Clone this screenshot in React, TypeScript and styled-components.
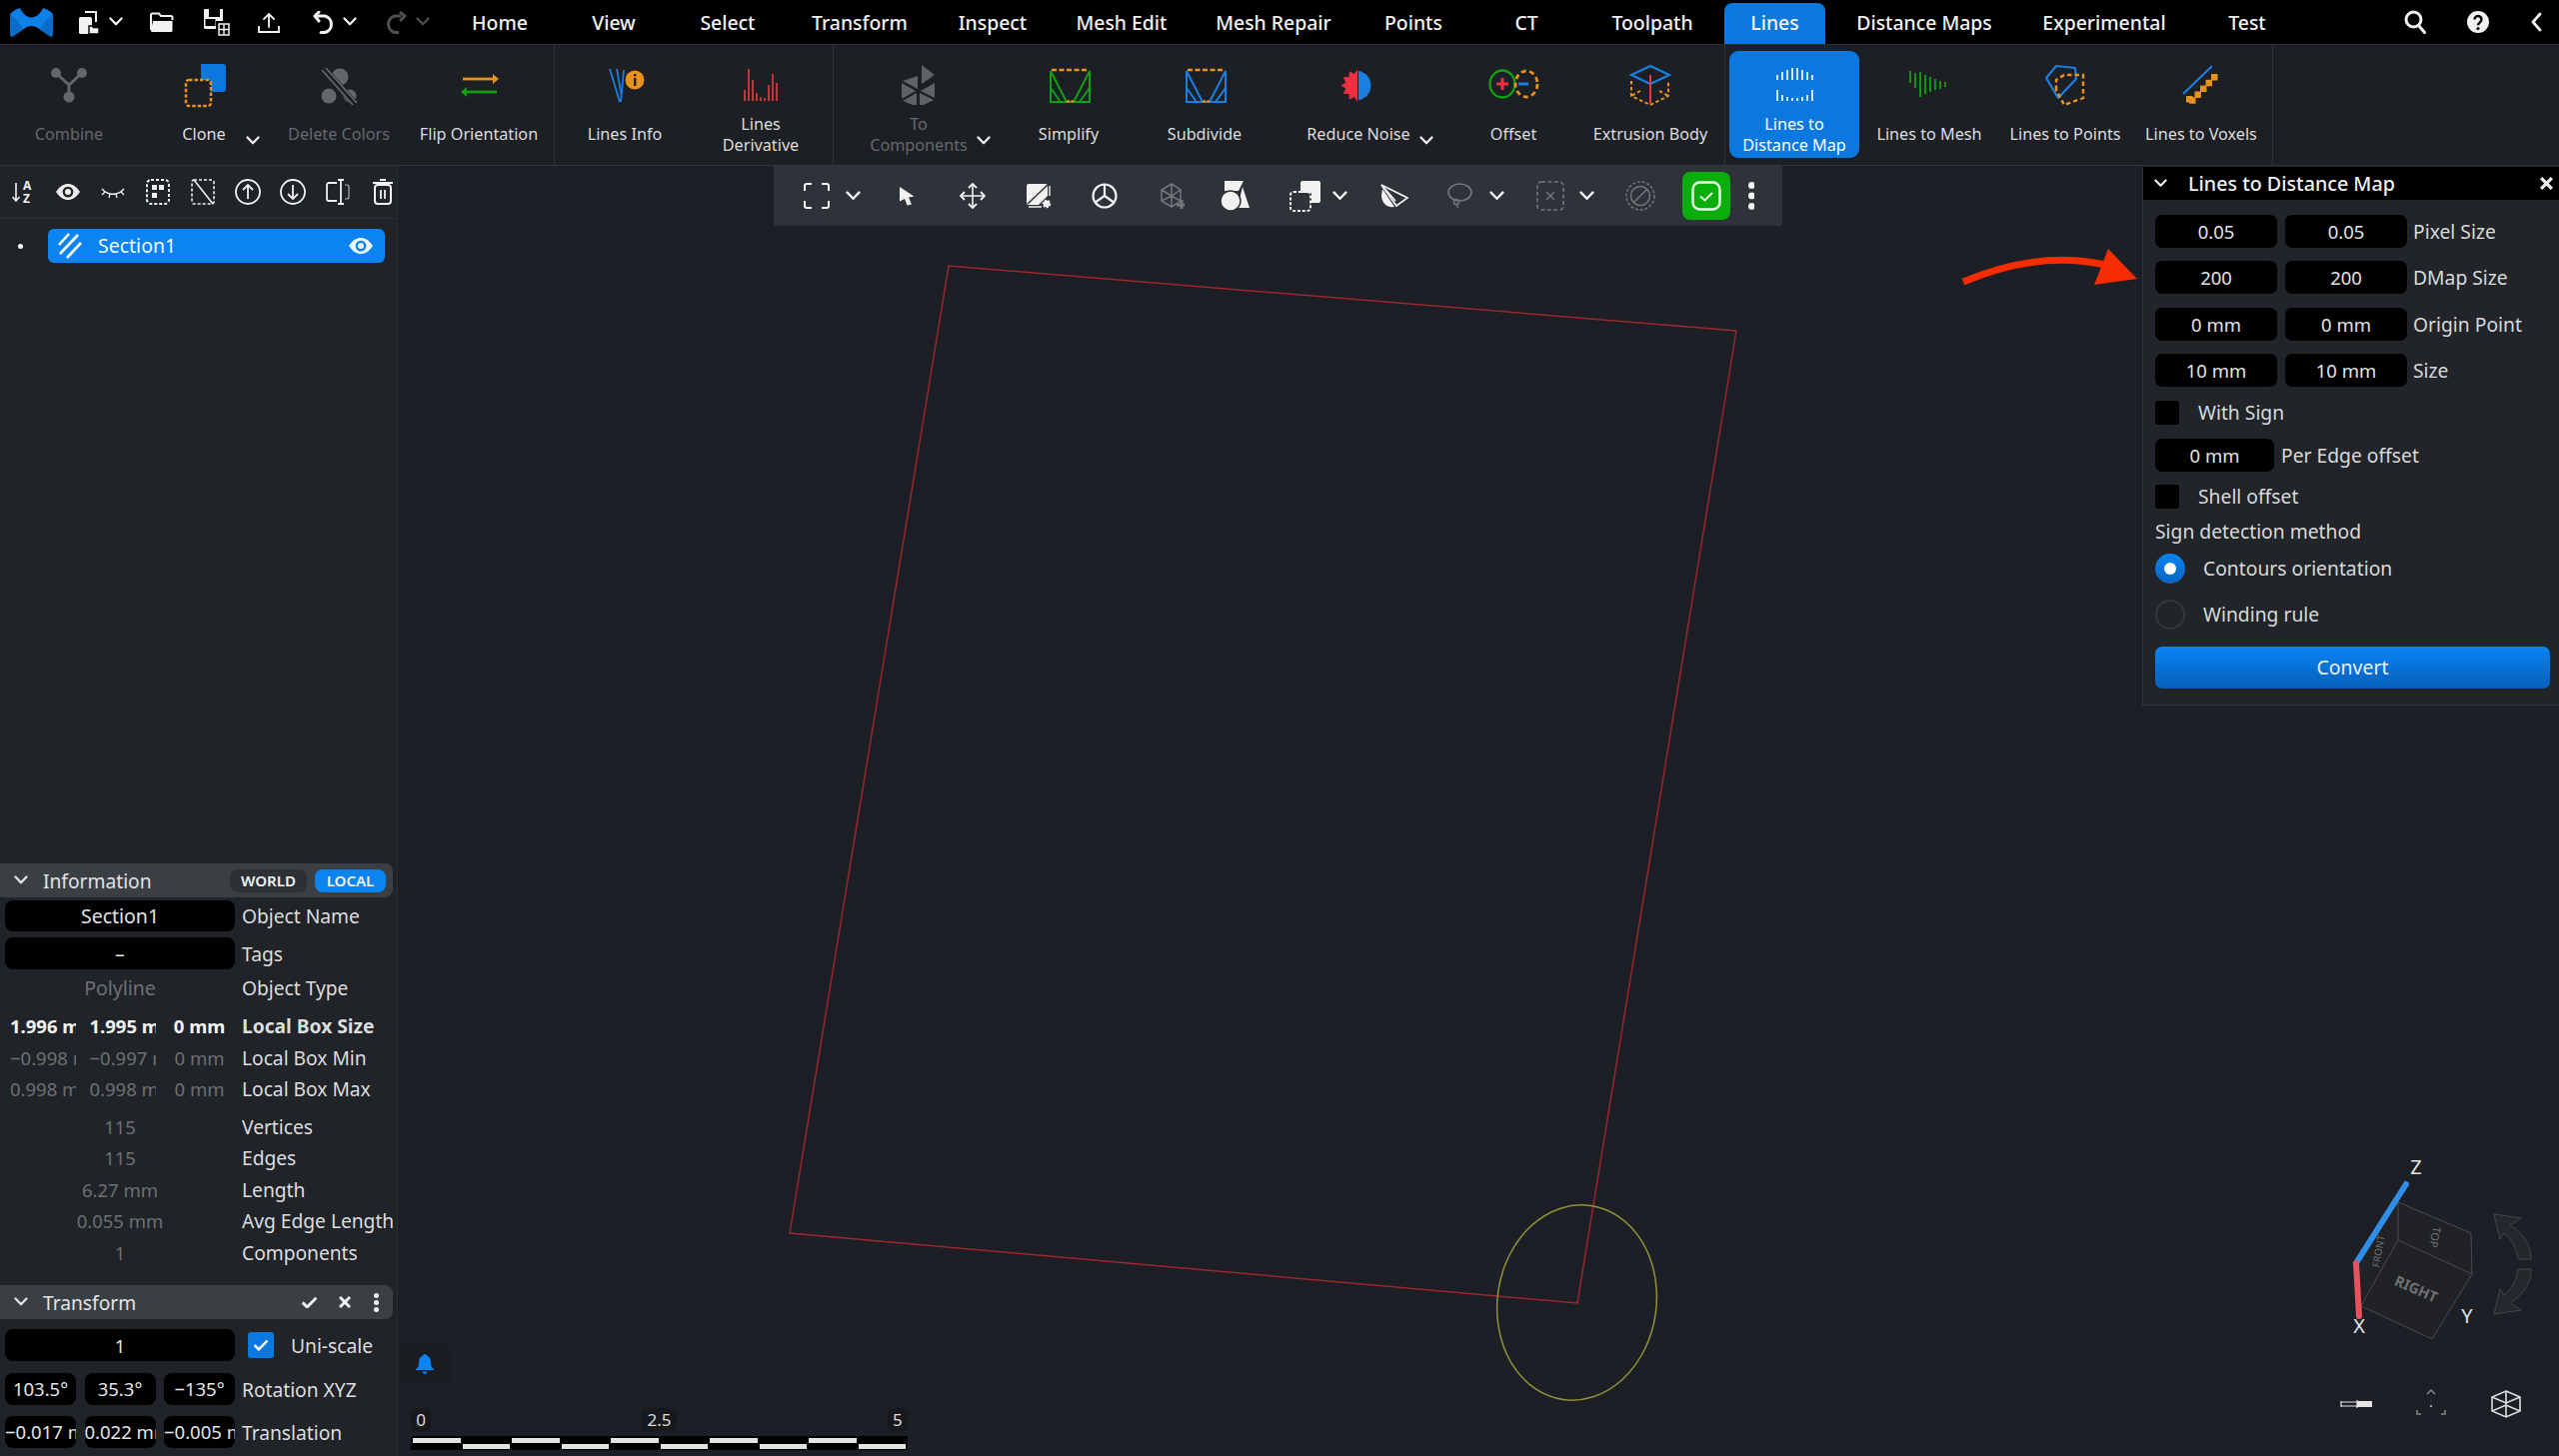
import React from "react";
import styled, { createGlobalStyle, css } from "styled-components";

const Global = createGlobalStyle`
  html, body { margin: 0; padding: 0; background: #1c1f25; }
  * { box-sizing: border-box; }
  body { font-family: "Noto Sans", "Liberation Sans", sans-serif; color: #dfe0e1; }
`;

/* ---------- page frame ---------- */
const Page = styled.div`
  width: 2560px; height: 1457px; display: flex; flex-direction: column; overflow: hidden; background: #1c1f25;
`;
const TopBar = styled.header`
  height: 45px; flex: none; background: #000; display: flex; align-items: stretch;
  border-bottom: 1px solid #2b2e33;
`;
const Quick = styled.div`
  display: flex; align-items: center; padding-left: 10px; width: 443px; flex: none;
`;
const QuickSlot = styled.span<{ $ml?: number; $dim?: boolean }>`
  display: flex; margin-left: ${(p) => p.$ml ?? 0}px; color: ${(p) => (p.$dim ? "#4d4f52" : "#f2f2f2")};
`;
const Tab = styled.div<{ $w: number; $active?: boolean }>`
  width: ${(p) => p.$w}px; display: flex; align-items: center; justify-content: center; flex: none;
  font-size: 19.4px; font-weight: 500; color: #f1f1f1; white-space: nowrap; padding-top: 1px;
  ${(p) => p.$active && css`background: #0a78de; border-radius: 8px 8px 0 0; margin-top: 3px; padding-top: 0; padding-bottom: 2px;`}
`;
const TopRight = styled.div`
  margin-left: auto; display: flex; align-items: center; gap: 41px; padding-right: 17px; color: #f2f2f2;
`;

/* ---------- ribbon ---------- */
const Ribbon = styled.div`
  height: 121px; flex: none; background: #1c1f24; display: flex; border-bottom: 1px solid #33363b;
`;
const Group = styled.div<{ $w: number; $pl?: number }>`
  width: ${(p) => p.$w}px; flex: none; display: flex; padding-left: ${(p) => p.$pl ?? 0}px;
  border-right: 1px solid #2f3237;
`;
const Item = styled.div<{ $w?: number; $ml?: number; $active?: boolean }>`
  position: relative; width: ${(p) => p.$w ?? 136}px; margin-left: ${(p) => p.$ml ?? 0}px; flex: none;
  display: flex; flex-direction: column; align-items: center; padding-top: 18px; height: 120px;
  ${(p) => p.$active && css`
    background: #0a78de; border-radius: 9px; margin-top: 6px; height: 107px; padding-top: 12px;
  `}
`;
const RibbonIconBox = styled.div`
  width: 44px; height: 44px; flex: none;
  svg { display: block; overflow: visible; }
`;
const RibbonLabel = styled.div<{ $off?: boolean; $active?: boolean }>`
  height: 44px; margin-top: 6px; display: flex; align-items: center; text-align: center; justify-content: center;
  font-size: 16.2px; line-height: 21.5px; width: 136px;
  color: ${(p) => (p.$off ? "#66696e" : p.$active ? "#ffffff" : "#dcdddf")};
`;
const RibbonCaret = styled.span<{ $right: number }>`
  position: absolute; right: ${(p) => p.$right}px; top: 91px; display: flex; color: #eee;
`;

/* ---------- main ---------- */
const Main = styled.div`
  flex: 1; min-height: 0; display: flex;
`;
const LeftPanel = styled.aside`
  width: 398px; flex: none; background: #202428; border-right: 1px solid #2a2d32; display: flex; flex-direction: column;
  padding-bottom: 8px;
`;
const LeftTools = styled.div`
  height: 53px; flex: none; display: flex; align-items: center; gap: 9px; padding-left: 5px;
  border-bottom: 1px solid #2e3237; color: #f0f0f0;
`;
const LeftTool = styled.span`
  width: 36px; height: 36px; display: flex; align-items: center; justify-content: center; flex: none;
`;
const TreeRow = styled.div`
  display: flex; align-items: center; height: 34px; margin-top: 10px; flex: none;
`;
const Bullet = styled.span`
  width: 5px; height: 5px; border-radius: 50%; background: #fff; margin-left: 18px; margin-right: 25px;
`;
const TreePill = styled.div`
  width: 337px; height: 34px; border-radius: 6px; background: #0a84f2; display: flex; align-items: center;
  padding-left: 10px; padding-right: 11px; font-size: 19.5px; color: #f1f7ff;
`;
const TreeName = styled.span`
  margin-left: 16px; margin-right: auto; margin-bottom: 2px;
`;
const TreeSpace = styled.div`
  flex: 1;
`;
const SectionHead = styled.div<{ $mt?: number }>`
  height: 34px; flex: none; margin-right: 4px; margin-top: ${(p) => p.$mt ?? 0}px;
  background: #3a3f44; border-radius: 0 8px 8px 0; display: flex; align-items: center;
  padding-left: 14px; font-size: 19.2px; color: #e2e3e4;
`;
const HeadTitle = styled.span`
  margin-left: 15px; margin-right: auto;
`;
const Toggle = styled.span<{ $on?: boolean }>`
  height: 23px; border-radius: 8px; display: flex; align-items: center; justify-content: center;
  font-size: 15px; font-weight: 600; width: ${(p) => (p.$on ? 71 : 77)}px; margin-right: ${(p) => (p.$on ? 7 : 8)}px;
  background: ${(p) => (p.$on ? "#0a84f2" : "#2d3136")}; color: #f2f2f2;
`;
const HeadIcon = styled.span<{ $mr: number }>`
  display: flex; margin-right: ${(p) => p.$mr}px; color: #f2f2f2;
`;
const InfoRow = styled.div<{ $mt?: number; $h?: number }>`
  display: flex; align-items: center; height: ${(p) => p.$h ?? 31}px; padding-left: 5px; flex: none;
  margin-top: ${(p) => p.$mt ?? 0}px;
`;
const Wide = styled.div<{ $black?: boolean; $dim?: boolean; $num?: boolean }>`
  width: 230px; height: 100%; flex: none; display: flex; align-items: center; justify-content: center;
  font-size: ${(p) => (p.$num ? 18.5 : 19.5)}px; border-radius: 8px;
  background: ${(p) => (p.$black ? "#000" : "transparent")};
  color: ${(p) => (p.$dim ? "#6d7074" : "#e4e4e4")};
`;
const Triple = styled.div`
  width: 230px; height: 100%; flex: none; display: flex; justify-content: space-between;
`;
const Cell = styled.div<{ $black?: boolean; $tone?: "bold" | "dim" | "norm" }>`
  width: 71px; height: 100%; border-radius: 8px; overflow: hidden; white-space: nowrap; text-align: center;
  font-size: 18.5px; line-height: ${(p) => (p.$black ? 32 : 31)}px;
  padding: ${(p) => (p.$black ? "0" : "0 5px")};
  background: ${(p) => (p.$black ? "#000" : "transparent")};
  color: ${(p) => (p.$tone === "dim" ? "#6d7074" : p.$tone === "bold" ? "#f4f4f4" : "#e4e4e4")};
  font-weight: ${(p) => (p.$tone === "bold" ? 700 : 400)};
`;
const RowLabel = styled.span<{ $bold?: boolean }>`
  margin-left: 7px; font-size: 19.2px; white-space: nowrap; color: #dcdddf; font-weight: ${(p) => (p.$bold ? 700 : 400)};
`;
const BlueCheck = styled.span`
  width: 26px; height: 26px; margin-left: 13px; border-radius: 3px; background: #0a78de; display: flex;
  align-items: center; justify-content: center; color: #fff; flex: none;
`;
const UniLabel = styled.span`
  margin-left: 17px; font-size: 19.2px; color: #dcdddf;
`;

/* ---------- viewport ---------- */
const Viewport = styled.div`
  position: relative; flex: 1; min-width: 0; background: #1c1f25;
`;
const Canvas = styled.svg`
  position: absolute; inset: 0; width: 100%; height: 100%;
`;
const ViewTools = styled.div`
  position: absolute; left: 376px; top: 0; width: 1009px; height: 60px; background: #2e3239;
  display: flex; align-items: center; padding-left: 25px; border-radius: 0 0 2px 2px;
`;
const ToolSlot = styled.span<{ $ml?: number; $off?: boolean }>`
  width: 36px; height: 36px; flex: none; display: flex; align-items: center; justify-content: center;
  margin-left: ${(p) => p.$ml ?? 0}px; color: ${(p) => (p.$off ? "#73767b" : "#f2f2f2")};
`;
const GreenBtn = styled.span`
  width: 48px; height: 48px; margin-left: 24px; flex: none; border-radius: 8px; background: #0aae0a;
  display: flex; align-items: center; justify-content: center; color: #eaffea;
`;
const BellBox = styled.div`
  position: absolute; left: 2px; top: 1179px; width: 50px; height: 40px; border-radius: 6px; background: #191c20;
  display: flex; align-items: center; justify-content: center; color: #0a84f2;
`;
const Scale = styled.div`
  position: absolute; left: 13px; top: 1243px; width: 497px; display: flex; flex-direction: column;
`;
const ScaleLabels = styled.div`
  display: flex; justify-content: space-between; height: 28px;
`;
const ScaleLabel = styled.span`
  height: 23px; padding: 0 5px; border-radius: 5px; background: #17191d; color: #dcdcdc; font-size: 17px; line-height: 23px;
  min-width: 20px; text-align: center;
`;
const ScaleBar = styled.div`
  height: 14px; background: #000; display: flex; gap: 0; padding: 2px 1px 1px;
`;
const ScaleSeg = styled.span<{ $up: boolean }>`
  flex: 1; height: 5px; margin: 0 1px; background: #e3e3e3; margin-top: ${(p) => (p.$up ? 0 : 6)}px;
`;

/* ---------- right panel ---------- */
const RightPanel = styled.section`
  position: absolute; right: 0; top: 1px; width: 417px; height: 539px; background: #212529;
  border-left: 1px solid #33373c; border-bottom: 1px solid #33373c;
  display: flex; flex-direction: column; padding-left: 12px;
`;
const PanelHead = styled.div`
  height: 33px; flex: none; margin-left: -12px; background: #000; display: flex; align-items: center;
  padding-left: 11px; padding-right: 6px; font-size: 19.7px; font-weight: 500; color: #eee;
`;
const PanelTitle = styled.span`
  margin-left: 21px; margin-right: auto;
`;
const FieldRow = styled.div<{ $mt: number; $h?: number }>`
  display: flex; align-items: center; flex: none; margin-top: ${(p) => p.$mt}px; height: ${(p) => p.$h ?? 33}px;
`;
const Field = styled.div<{ $w?: number; $ml?: number }>`
  width: ${(p) => p.$w ?? 122}px; margin-left: ${(p) => p.$ml ?? 0}px; height: 33px; flex: none; background: #000; border-radius: 7px;
  display: flex; align-items: center; justify-content: center; font-size: 18.5px; color: #e2e2e2;
`;
const FieldLabel = styled.span<{ $ml: number }>`
  margin-left: ${(p) => p.$ml}px; font-size: 19.3px; color: #d8d9da; white-space: nowrap;
`;
const Box = styled.span`
  width: 24px; height: 24px; background: #000; border-radius: 3px; flex: none;
`;
const Radio = styled.span<{ $on?: boolean }>`
  width: 30px; height: 30px; border-radius: 50%; flex: none; display: flex; align-items: center; justify-content: center;
  ${(p) => (p.$on
    ? css`background: linear-gradient(#0a84f2, #0666c4);`
    : css`border: 2px solid #34383d;`)}
`;
const RadioDot = styled.span`
  width: 12px; height: 12px; border-radius: 50%; background: #fff;
`;
const Convert = styled.button`
  margin-top: 17px; width: 395px; height: 42px; flex: none; border: 0; border-radius: 7px; font: inherit; font-size: 19.5px; color: #e9f3ff;
  background: linear-gradient(#0a84f2, #0560bd);
`;

/* ---------- icons ---------- */
const Chev = ({ w = 14, sw = 2.3 }: { w?: number; sw?: number }) => (
  <svg width={w} height={w * 0.65} viewBox="0 0 14 9" fill="none" stroke="currentColor" strokeWidth={sw} strokeLinecap="round" strokeLinejoin="round">
    <path d="M1.5 1.5 7 7.2 12.5 1.5" />
  </svg>
);

const Logo = () => (
  <svg width="43" height="29" viewBox="0 0 43 29">
    <path fill="#0d80ea" d="M0 6C3 3 6 1 10 0C13 6 17 9.500 21.500 9.500 26 9.500 30 6 33 0C37 1 40 3 43 6V27L41 29 30 21.500C27 19 24 18 21.500 18 19 18 16 19 13 21.500L2 29 0 27Z" />
    <path fill="#0a6cc9" d="M0 6C4 9 9 14 13 21.500L2 29 0 27ZM43 6C39 9 34 14 30 21.500L41 29 43 27Z" />
  </svg>
);
const NewDoc = () => (
  <svg width="22" height="23" viewBox="0 0 22 23" fill="none">
    <path d="M7 1h11v10" stroke="currentColor" strokeWidth="2" />
    <rect x="1" y="6" width="13" height="17" rx="1.500" fill="currentColor" />
    <path d="M11 15h3l1.500 1.500H21V23H11Z" fill="currentColor" stroke="#000" strokeWidth="1.400" />
  </svg>
);
const Folder = () => (
  <svg width="24" height="21" viewBox="0 0 24 21" fill="none" stroke="currentColor" strokeWidth="2">
    <path d="M1 18V3a1.500 1.500 0 0 1 1.500-1.500H9L11 4h10a1.500 1.500 0 0 1 1.500 1.500V8" />
    <path d="M1 19a1 1 0 0 0 1 1h19a1.500 1.500 0 0 0 1.500-1.500V9H3Z" fill="currentColor" stroke="none" />
  </svg>
);
const SaveAll = () => (
  <svg width="27" height="28" viewBox="0 0 27 28" fill="none">
    <path d="M1 2a1 1 0 0 1 1-1h4v8h11V1l3 0v12h-7v8H2a1 1 0 0 1-1-1Z" fill="currentColor" />
    <rect x="9" y="1" width="5" height="5" fill="#000" />
    <rect x="2.500" y="11" width="10" height="7" fill="#000" />
    <rect x="16" y="16" width="10" height="11" stroke="currentColor" strokeWidth="1.500" />
    <path d="M21 16v11M16 21.500h10" stroke="currentColor" strokeWidth="1.500" />
  </svg>
);
const Upload = () => (
  <svg width="22" height="21" viewBox="0 0 22 21" fill="none" stroke="currentColor" strokeWidth="1.800">
    <path d="M11 15V2M6 7l5-5 5 5" strokeLinecap="round" />
    <path d="M1 14v6h20v-6" />
  </svg>
);
const Undo = () => (
  <svg width="22" height="23" viewBox="0 0 22 23" fill="none" stroke="currentColor" strokeWidth="3">
    <path d="M4 5h8a8.500 8.500 0 0 1 0 16.500H8" strokeLinecap="round" />
    <path d="M6 1 2 5l4 5" strokeLinecap="round" strokeLinejoin="round" />
  </svg>
);
const Redo = () => (
  <svg width="22" height="23" viewBox="0 0 22 23" fill="none" stroke="currentColor" strokeWidth="3">
    <path d="M16 5H10a8.500 8.500 0 0 0 0 16.500h4" />
    <path d="M15 1l5 4-5 5" />
  </svg>
);
const Search = () => (
  <svg width="22" height="24" viewBox="0 0 22 24" fill="none" stroke="currentColor" strokeWidth="3">
    <circle cx="9.500" cy="9.500" r="7.500" />
    <path d="M15 16l5.500 6.500" strokeLinecap="round" />
  </svg>
);
const Help = () => (
  <svg width="22" height="22" viewBox="0 0 22 22">
    <circle cx="11" cy="11" r="11" fill="currentColor" />
    <path d="M7.500 8.500a3.500 3.500 0 1 1 5.500 2.800c-1.300 1-2 1.500-2 3" fill="none" stroke="#000" strokeWidth="2.500" />
    <circle cx="11" cy="17.500" r="1.600" fill="#000" />
  </svg>
);
const BackChev = () => (
  <svg width="12" height="20" viewBox="0 0 12 20" fill="none" stroke="currentColor" strokeWidth="2.800" strokeLinecap="round" strokeLinejoin="round">
    <path d="M10 2 3 10l7 8" />
  </svg>
);

/* ribbon icons, on a 44 x 44 box */
const R = ({ children }: { children: React.ReactNode }) => (
  <svg width="44" height="44" viewBox="0 0 44 44" fill="none">{children}</svg>
);
const GR = "#63666b";
const OR = "#e8921b";
const BL = "#1a7fe0";
const GN = "#12a012";

const ICombine = () => (
  <R>
    <path d="M9 10 22 22 35 10M22 22V34" stroke={GR} strokeWidth="3" />
    <circle cx="9" cy="10" r="5" fill={GR} /><circle cx="35" cy="10" r="5" fill={GR} /><circle cx="22" cy="34" r="5.500" fill={GR} />
  </R>
);
const IClone = () => (
  <R>
    <path d="M19 1h22a3 3 0 0 1 3 3v22a3 3 0 0 1-3 3H19Z" fill="#0a78de" />
    <rect x="4" y="17" width="25" height="26" rx="3" fill="#1c1f24" stroke={OR} strokeWidth="2.500" strokeDasharray="3.500 2" />
  </R>
);
const IDelete = () => (
  <R>
    <circle cx="23" cy="14" r="8.500" fill={GR} /><circle cx="12" cy="33" r="7.500" fill={GR} /><circle cx="33" cy="33" r="6.500" fill={GR} />
    <path d="M7 6 38 41" stroke="#1c1f24" strokeWidth="7" />
    <path d="M5 7 36 42M9 5 40 40" stroke={GR} strokeWidth="1.800" />
  </R>
);
const IFlip = () => (
  <R>
    <path d="M6 16H37" stroke={OR} strokeWidth="2.800" /><path d="M36 11l6 5-6 5Z" fill={OR} />
    <path d="M9 29H40" stroke={GN} strokeWidth="2.800" /><path d="M10 24l-6 5 6 5Z" fill={GN} />
  </R>
);
const ILinesInfo = () => (
  <R>
    <path d="M7 6 17 39M14 6 19 34M21 7 18 39" stroke={BL} strokeWidth="1.800" />
    <circle cx="32" cy="17" r="9.500" fill={OR} />
    <rect x="31" y="15" width="2.400" height="8" fill="#1c1f24" /><rect x="31" y="11" width="2.400" height="2.400" fill="#1c1f24" />
  </R>
);
const IDeriv = () => (
  <R>
    <path d="M6 38V27M10 38V6M14 38V17M18 38V30M22 38V34M26 38V35M30 38V22M34 38V11M38 38V20" stroke="#c4323d" strokeWidth="2" />
  </R>
);
const IComponents = () => (
  <R>
    <g fill="#5f6266">
      <path d="M25 2 38 12 25 21Z" />
      <path d="M21 13V26L6 18Z" /><path d="M5 20 19 28 5 36Z" /><path d="M6 38 20 30V42H16Z" />
      <path d="M23 30 37 37 27 42H23Z" /><path d="M38 20V35L24 28Z" />
    </g>
  </R>
);
const IMeshTri = ({ c }: { c: string }) => (
  <R>
    <path d="M4 8V39H43V8L27 39M4 8 20 39M4 25 14 39M43 25 33 39" stroke={c} strokeWidth="2" />
    <path d="M5 7H42" stroke={OR} strokeWidth="2.500" strokeDasharray="5 2.500" />
    <path d="M20 38.500H27" stroke={OR} strokeWidth="2.500" strokeDasharray="3 1.500" />
  </R>
);
const spikes = (() => {
  const pts: string[] = ["21,6"];
  for (let i = 1; i < 12; i++) {
    const a = -Math.PI / 2 - (i * Math.PI) / 12;
    const r = i % 2 ? 12 : 16.500;
    pts.push(`${(21 + Math.cos(a) * r).toFixed(1)},${(22.5 + Math.sin(a) * r).toFixed(1)}`);
  }
  pts.push("21,39");
  return pts.join(" ");
})();
const INoise = () => (
  <R>
    <polygon points={spikes} fill="#f0303f" />
    <path d="M22 8c3 0 3 1 5 2s3 1 4 3 2 2 2.500 4 1 3 1 5.500-1 3-1 5.500-2 2-2.500 4-3 2-4 3-2 2-5 2Z" fill={BL} />
  </R>
);
const IOffset = () => (
  <R>
    <ellipse cx="11" cy="21" rx="12.500" ry="13.500" stroke={GN} strokeWidth="2.300" />
    <path d="M11 15V27M5 21H17" stroke="#ee3040" strokeWidth="3" />
    <ellipse cx="35" cy="21" rx="11" ry="13" stroke={OR} strokeWidth="2.800" strokeDasharray="5 3.500" />
    <path d="M27 21H37" stroke={BL} strokeWidth="3" />
  </R>
);
const IExtrude = () => (
  <R>
    <path d="M3 18V33L22 42 40 33V18M12 28 3 33M31 28 40 33" stroke={OR} strokeWidth="2" strokeDasharray="3.500 2.500" />
    <path d="M22 3 41 12 22 21 3 12Z" stroke={BL} strokeWidth="2.200" />
    <path d="M22 12V41" stroke="#e23a48" strokeWidth="2" />
  </R>
);
const ILinesDM = () => (
  <R>
    <path d="M5 17V12M10 17V9M15 17V7M20 17V5M25 17V5M30 17V7M35 17V9M40 17V12" stroke="#fff" strokeWidth="1.800" opacity=".9" />
    <path d="M5 38V27M10 38V32M15 38V34M20 38V35M25 38V35M30 38V34M35 38V32M40 38V27" stroke="#fff" strokeWidth="1.800" opacity=".9" />
  </R>
);
const ILinesMesh = () => (
  <R>
    <path d="M3 8V20M8 10V25M13 9V34M18 12V31M23 14V29M28 16V27M33 18V26M38 19V24" stroke={GN} strokeWidth="1.800" />
  </R>
);
const ILinesPoints = () => (
  <R>
    <path d="M3 15 13 3 32 5 33 16 15 35Z" stroke={BL} strokeWidth="2.200" strokeLinejoin="round" />
    <path d="M13 27V17L21 12H40V35L21 42Z" stroke={OR} strokeWidth="2.500" strokeDasharray="4.500 3" />
  </R>
);
const ILinesVoxels = () => (
  <R>
    <path d="M33 3 4 31" stroke={BL} strokeWidth="2.200" />
    <g fill={OR}>
      {[0, 1, 2, 3, 4].map((i) => <rect key={i} x={32 - i * 5.500} y={11 + i * 5.800} width="6.500" height="6.500" />)}
      <rect x="7" y="33" width="6.500" height="6.500" />
    </g>
  </R>
);

/* left panel toolbar icons */
const S = ({ w = 26, h = 26, children }: { w?: number; h?: number; children: React.ReactNode }) => (
  <svg width={w} height={h} viewBox={`0 0 ${w} ${h}`} fill="none" stroke="currentColor" strokeWidth="1.800">{children}</svg>
);
const IEye = ({ w = 26, hole = "#202428" }: { w?: number; hole?: string }) => (
  <svg width={w} height={w * 0.7} viewBox="0 0 26 18">
    <path d="M1 9C5 3 9 1 13 1s8 2 12 8c-4 6-8 8-12 8S5 15 1 9Z" fill="currentColor" />
    <circle cx="13" cy="9" r="5.400" fill={hole} />
    <circle cx="13" cy="9" r="3" fill="currentColor" />
  </svg>
);
const ISort = () => (
  <S>
    <path d="M6 4V22M2.500 18 6 22l3.500-4" strokeWidth="1.600" />
    <text x="13" y="11" fill="currentColor" stroke="none" fontSize="12" fontWeight="700" fontFamily="Noto Sans">A</text>
    <text x="13" y="24" fill="currentColor" stroke="none" fontSize="12" fontWeight="700" fontFamily="Noto Sans">Z</text>
  </S>
);
const IClosedEye = () => (
  <S>
    <path d="M2 10c6 7 16 7 22 0M5 13l-3 3M10 15l-1 4M16 15l1 4M21 13l3 3" strokeWidth="1.300" />
  </S>
);
const ISelAll = () => (
  <S>
    <rect x="2" y="1" width="22" height="24" rx="4" strokeDasharray="3 2" strokeWidth="2" />
    <rect x="7" y="6" width="5" height="5" fill="currentColor" stroke="none" />
    <rect x="14" y="6" width="5" height="5" fill="currentColor" stroke="none" />
    <rect x="7" y="14" width="5" height="5" fill="currentColor" stroke="none" />
  </S>
);
const ISelNone = () => (
  <S>
    <rect x="2" y="1" width="22" height="24" rx="2" strokeDasharray="3 2" strokeWidth="1.600" />
    <path d="M4 1 23 25" strokeWidth="1.600" />
  </S>
);
const IUp = () => (
  <S><circle cx="13" cy="13" r="12" /><path d="M13 20V6M8 11l5-5 5 5" /></S>
);
const IDown = () => (
  <S><circle cx="13" cy="13" r="12" /><path d="M13 6v14M8 15l5 5 5-5" /></S>
);
const ISplit = () => (
  <S>
    <path d="M12 4H4a2 2 0 0 0-2 2v14a2 2 0 0 0 2 2h8" />
    <path d="M20 6h2a2 2 0 0 1 2 2v10a2 2 0 0 1-2 2h-2" strokeWidth="1.200" opacity=".7" />
    <path d="M16 1v24M13 1h6M13 25h6" />
  </S>
);
const ITrash = () => (
  <S>
    <rect x="5" y="6" width="16" height="19" rx="3" strokeWidth="2" />
    <path d="M3 4h20M10 1h6" strokeWidth="2" />
    <path d="M11 11v9M15 11v9" strokeWidth="1.800" />
  </S>
);
const ISection = () => (
  <svg width="24" height="26" viewBox="0 0 24 26" stroke="#fff" strokeWidth="2.600" fill="none">
    <path d="M1 12 11 1M2 21 20 2M9 25 23 10" />
  </svg>
);

/* viewport toolbar icons */
const IFull = () => (
  <S><path d="M1 8V3a2 2 0 0 1 2-2h5M18 1h5a2 2 0 0 1 2 2v5M25 18v5a2 2 0 0 1-2 2h-5M8 25H3a2 2 0 0 1-2-2v-5" strokeWidth="2" /></S>
);
const ICursor = () => (
  <svg width="15" height="19" viewBox="0 0 15 19"><path d="M0 0 14.500 9.500 9 10.500 12 17.500 7.500 18.500 5 12 0 14.500Z" fill="currentColor" /></svg>
);
const IMove = () => (
  <S>
    <path d="M13 1V25M1 13H25" strokeWidth="1.600" />
    <path d="M9 5l4-4 4 4M9 21l4 4 4-4M5 9l-4 4 4 4M21 9l4 4-4 4" strokeWidth="1.800" />
  </S>
);
const ISurface = () => (
  <S>
    <path d="M3 1h17a2 2 0 0 1 2 2v10L13 22H3a2 2 0 0 1-2-2V3a2 2 0 0 1 2-2Z" fill="currentColor" stroke="none" />
    <path d="M22 2 2 21" stroke="#2e3239" strokeWidth="1.500" />
    <path d="M24 3v10M3 24h13" strokeWidth="1.400" />
    <circle cx="21" cy="21" r="3.200" fill="currentColor" stroke="currentColor" strokeWidth="2.200" strokeDasharray="2 1.200" />
  </S>
);
const IMercedes = () => (
  <S><circle cx="13" cy="13" r="11.500" strokeWidth="2.200" /><path d="M13 1V13L3 20M13 13 23 20" strokeWidth="2.200" /></S>
);
const IMeshPlus = () => (
  <S>
    <path d="M3 7 13 1 22 7V18L13 24 3 18ZM13 1V13M3 7 13 13 22 7M3 18 13 13 22 18M13 13V24" strokeWidth="1.500" />
    <path d="M23 17V27M18 22H28" strokeWidth="3" />
  </S>
);
const IShapes = () => (
  <svg width="30" height="30" viewBox="0 0 30 30" fill="currentColor">
    <path d="M5 0H24L19 10H5Z" />
    <path d="M23 6 30 27H18Z" />
    <circle cx="11" cy="20" r="10" stroke="#2e3239" strokeWidth="1.500" />
  </svg>
);
const ICopy = () => (
  <svg width="31" height="31" viewBox="0 0 31 31" fill="none">
    <path d="M11 2a2 2 0 0 1 2-2h16a2 2 0 0 1 2 2v18a2 2 0 0 1-2 2H22V12H11Z" fill="currentColor" />
    <rect x="1" y="11" width="20" height="19" rx="3" stroke="currentColor" strokeWidth="2" strokeDasharray="3 1.800" />
  </svg>
);
const ISail = () => (
  <svg width="28" height="25" viewBox="0 0 28 25" fill="none" stroke="currentColor" strokeWidth="1.700">
    <path d="M1 1 27 14 16 22Z" />
    <path d="M1 1 15 17" />
    <path d="M1 11C1 19 6 24 14 23L2 5Z" fill="currentColor" stroke="none" />
  </svg>
);
const ILasso = () => (
  <svg width="25" height="26" viewBox="0 0 25 26" fill="none" stroke="currentColor" strokeWidth="1.600">
    <ellipse cx="12.500" cy="9.500" rx="11.500" ry="8.500" />
    <circle cx="9" cy="19" r="2.500" />
    <path d="M9 21c0 2 1 3 2 4" />
  </svg>
);
const IXBox = () => (
  <S w={28} h={30}>
    <rect x="1" y="1" width="26" height="28" rx="4" strokeDasharray="4 2.500" strokeWidth="1.600" />
    <path d="M10 11l8 8M18 11l-8 8" strokeWidth="1.400" />
  </S>
);
const INoEntry = () => (
  <S w={30} h={30}>
    <circle cx="15" cy="15" r="14" strokeDasharray="3 1.800" strokeWidth="1.500" />
    <circle cx="15" cy="15" r="9.500" strokeWidth="1.600" />
    <path d="M8.500 21.500 21.500 8.500" strokeWidth="1.600" />
  </S>
);
const IGreenCheck = () => (
  <svg width="30" height="30" viewBox="0 0 30 30" fill="none" stroke="currentColor">
    <rect x="1.500" y="1.500" width="27" height="27" rx="7" strokeWidth="2.400" />
    <path d="M9 15.500 13.500 19.500 21 12" strokeWidth="2" />
  </svg>
);
const IDots = ({ r = 3.400, gap = 10.500 }: { r?: number; gap?: number }) => (
  <svg width={r * 2} height={gap * 2 + r * 2} viewBox={`0 0 ${r * 2} ${gap * 2 + r * 2}`} fill="currentColor">
    <circle cx={r} cy={r} r={r} /><circle cx={r} cy={r + gap} r={r} /><circle cx={r} cy={r + gap * 2} r={r} />
  </svg>
);
const ICheck = ({ w = 18, sw = 3.200 }: { w?: number; sw?: number }) => (
  <svg width={w} height={w * 0.75} viewBox="0 0 18 14" fill="none" stroke="currentColor" strokeWidth={sw}>
    <path d="M1.500 7 6.500 12 16.500 2" />
  </svg>
);
const ICross = ({ w = 12 }: { w?: number }) => (
  <svg width={w} height={w} viewBox="0 0 12 12" fill="none" stroke="currentColor" strokeWidth="3">
    <path d="M1 1 11 11M11 1 1 11" />
  </svg>
);
const IBell = () => (
  <svg width="18" height="20" viewBox="0 0 18 20" fill="currentColor">
    <path d="M9 0a2 2 0 0 1 2 1.500C14 2.500 15 5 15 9c0 3 1 5 3 6v1H0v-1c2-1 3-3 3-6 0-4 1-6.500 4-7.500A2 2 0 0 1 9 0Z" />
    <path d="M6.500 17.500h5a2.500 2.500 0 0 1-5 0Z" />
  </svg>
);

/* ---------- data ---------- */
const tabs: [string, number][] = [
  ["Home", 114], ["View", 114], ["Select", 114], ["Transform", 150], ["Inspect", 116], ["Mesh Edit", 142],
  ["Mesh Repair", 162], ["Points", 118], ["CT", 108], ["Toolpath", 144], ["Lines", 101], ["Distance Maps", 198],
  ["Experimental", 162], ["Test", 124],
];

type Row = { v: string; l: string; dim?: boolean; black?: boolean; mt?: number };
const topRows: Row[] = [
  { v: "Section1", l: "Object Name", black: true, mt: 3 },
  { v: "–", l: "Tags", black: true, mt: 6 },
  { v: "Polyline", l: "Object Type", dim: true, mt: 3 },
];
const boxRows: { c: string[]; l: string; tone: "bold" | "dim"; mt: number }[] = [
  { c: ["1.996 mm", "1.995 mm", "0 mm"], l: "Local Box Size", tone: "bold", mt: 7 },
  { c: ["−0.998 mm", "−0.997 mm", "0 mm"], l: "Local Box Min", tone: "dim", mt: 1 },
  { c: ["0.998 mm", "0.998 mm", "0 mm"], l: "Local Box Max", tone: "dim", mt: 0 },
];
const statRows: Row[] = [
  { v: "115", l: "Vertices", mt: 7 }, { v: "115", l: "Edges" }, { v: "6.27 mm", l: "Length", mt: 1 },
  { v: "0.055 mm", l: "Avg Edge Length" }, { v: "1", l: "Components", mt: 1 },
];
const mapRows: { a: string; b: string; l: string; mt: number }[] = [
  { a: "0.05", b: "0.05", l: "Pixel Size", mt: 14.5 },
  { a: "200", b: "200", l: "DMap Size", mt: 13.5 },
  { a: "0 mm", b: "0 mm", l: "Origin Point", mt: 13.5 },
  { a: "10 mm", b: "10 mm", l: "Size", mt: 13.5 },
];

export default function App() {
  return (
    <Page>
      <Global />
      <TopBar>
        <Quick>
          <QuickSlot><Logo /></QuickSlot>
          <QuickSlot $ml={25}><NewDoc /></QuickSlot>
          <QuickSlot $ml={9}><Chev /></QuickSlot>
          <QuickSlot $ml={27}><Folder /></QuickSlot>
          <QuickSlot $ml={29}><SaveAll /></QuickSlot>
          <QuickSlot $ml={28}><Upload /></QuickSlot>
          <QuickSlot $ml={33}><Undo /></QuickSlot>
          <QuickSlot $ml={8}><Chev /></QuickSlot>
          <QuickSlot $ml={28} $dim><Redo /></QuickSlot>
          <QuickSlot $ml={9} $dim><Chev /></QuickSlot>
        </Quick>
        {tabs.map(([t, w]) => <Tab key={t} $w={w} $active={t === "Lines"}>{t}</Tab>)}
        <TopRight>
          <Search /><Help /><BackChev />
        </TopRight>
      </TopBar>

      <Ribbon>
        <Group $w={555}>
          <Item $w={138}><RibbonIconBox><ICombine /></RibbonIconBox><RibbonLabel $off>Combine</RibbonLabel></Item>
          <Item $w={132}><RibbonIconBox><IClone /></RibbonIconBox><RibbonLabel>Clone</RibbonLabel><RibbonCaret $right={10}><Chev /></RibbonCaret></Item>
          <Item $w={138}><RibbonIconBox><IDelete /></RibbonIconBox><RibbonLabel $off>Delete Colors</RibbonLabel></Item>
          <Item $w={142}><RibbonIconBox><IFlip /></RibbonIconBox><RibbonLabel>Flip Orientation</RibbonLabel></Item>
        </Group>
        <Group $w={279} $pl={2}>
          <Item><RibbonIconBox><ILinesInfo /></RibbonIconBox><RibbonLabel>Lines Info</RibbonLabel></Item>
          <Item><RibbonIconBox><IDeriv /></RibbonIconBox><RibbonLabel>Lines<br />Derivative</RibbonLabel></Item>
        </Group>
        <Group $w={892} $pl={17}>
          <Item>
            <RibbonIconBox><IComponents /></RibbonIconBox><RibbonLabel $off>To<br />Components</RibbonLabel>
            <RibbonCaret $right={-4}><Chev /></RibbonCaret>
          </Item>
          <Item $ml={14}><RibbonIconBox><IMeshTri c={GN} /></RibbonIconBox><RibbonLabel>Simplify</RibbonLabel></Item>
          <Item><RibbonIconBox><IMeshTri c={BL} /></RibbonIconBox><RibbonLabel>Subdivide</RibbonLabel></Item>
          <Item $ml={18}>
            <RibbonIconBox><INoise /></RibbonIconBox><RibbonLabel>Reduce Noise</RibbonLabel>
            <RibbonCaret $right={-7}><Chev /></RibbonCaret>
          </Item>
          <Item $ml={19}><RibbonIconBox><IOffset /></RibbonIconBox><RibbonLabel>Offset</RibbonLabel></Item>
          <Item $ml={1}><RibbonIconBox><IExtrude /></RibbonIconBox><RibbonLabel>Extrusion Body</RibbonLabel></Item>
        </Group>
        <Group $w={548} $pl={4}>
          <Item $w={130} $active><RibbonIconBox><ILinesDM /></RibbonIconBox><RibbonLabel $active>Lines to<br />Distance Map</RibbonLabel></Item>
          <Item $ml={2}><RibbonIconBox><ILinesMesh /></RibbonIconBox><RibbonLabel>Lines to Mesh</RibbonLabel></Item>
          <Item><RibbonIconBox><ILinesPoints /></RibbonIconBox><RibbonLabel>Lines to Points</RibbonLabel></Item>
          <Item><RibbonIconBox><ILinesVoxels /></RibbonIconBox><RibbonLabel>Lines to Voxels</RibbonLabel></Item>
        </Group>
      </Ribbon>

      <Main>
        <LeftPanel>
          <LeftTools>
            <LeftTool><ISort /></LeftTool><LeftTool><IEye /></LeftTool><LeftTool><IClosedEye /></LeftTool>
            <LeftTool><ISelAll /></LeftTool><LeftTool><ISelNone /></LeftTool><LeftTool><IUp /></LeftTool>
            <LeftTool><IDown /></LeftTool><LeftTool><ISplit /></LeftTool><LeftTool><ITrash /></LeftTool>
          </LeftTools>
          <TreeRow>
            <Bullet />
            <TreePill><ISection /><TreeName>Section1</TreeName><IEye hole="#0a84f2" /></TreePill>
          </TreeRow>
          <TreeSpace />
          <SectionHead>
            <Chev /><HeadTitle>Information</HeadTitle>
            <Toggle>WORLD</Toggle><Toggle $on>LOCAL</Toggle>
          </SectionHead>
          {topRows.map((r) => (
            <InfoRow key={r.l} $mt={r.mt} $h={r.l === "Tags" ? 32 : 31}>
              <Wide $black={r.black} $dim={r.dim}>{r.v}</Wide><RowLabel>{r.l}</RowLabel>
            </InfoRow>
          ))}
          {boxRows.map((r) => (
            <InfoRow key={r.l} $mt={r.mt}>
              <Triple>{r.c.map((c, i) => <Cell key={i} $tone={r.tone}>{c}</Cell>)}</Triple>
              <RowLabel $bold={r.tone === "bold"}>{r.l}</RowLabel>
            </InfoRow>
          ))}
          {statRows.map((r) => (
            <InfoRow key={r.l} $mt={r.mt}>
              <Wide $dim $num>{r.v}</Wide><RowLabel>{r.l}</RowLabel>
            </InfoRow>
          ))}
          <SectionHead $mt={17}>
            <Chev /><HeadTitle>Transform</HeadTitle>
            <HeadIcon $mr={21}><ICheck w={17} /></HeadIcon>
            <HeadIcon $mr={23}><ICross /></HeadIcon>
            <HeadIcon $mr={14}><IDots r={2.5} gap={7} /></HeadIcon>
          </SectionHead>
          <InfoRow $mt={10} $h={32}>
            <Wide $black $num>1</Wide><BlueCheck><ICheck w={16} sw={3} /></BlueCheck><UniLabel>Uni-scale</UniLabel>
          </InfoRow>
          <InfoRow $mt={12} $h={32}>
            <Triple><Cell $black>103.5°</Cell><Cell $black>35.3°</Cell><Cell $black>−135°</Cell></Triple>
            <RowLabel>Rotation XYZ</RowLabel>
          </InfoRow>
          <InfoRow $mt={11} $h={32}>
            <Triple><Cell $black>−0.017 mm</Cell><Cell $black>0.022 mm</Cell><Cell $black>−0.005 mm</Cell></Triple>
            <RowLabel>Translation</RowLabel>
          </InfoRow>
        </LeftPanel>

        <Viewport>
          <Canvas viewBox="398 166 2162 1291" fill="none">
            <polygon points="949,266 1737,331 1578,1304 790,1234" stroke="#9c2630" strokeWidth="1.500" />
            <ellipse cx="1577.500" cy="1303.500" rx="79.500" ry="98" transform="rotate(8 1577.5 1303.5)" stroke="#8f9436" strokeWidth="1.500" />

            {/* red annotation arrow */}
            <path d="M1964 282Q2040 250 2106 265" stroke="#f42c00" strokeWidth="7" />
            <polygon points="2109,249 2138,279 2095,285" fill="#f42c00" />

            {/* orientation cube */}
            <g stroke="#4a4c50" strokeWidth="1">
              <path d="M2399 1203 2472 1234 2473 1275 2433 1340 2362 1307 2357 1264Z" fill="#202226" />
              <path d="M2399 1241 2473 1275M2399 1241 2362 1307M2399 1203V1241" />
            </g>
            <text x="2417" y="1295" transform="rotate(24 2417 1290)" fill="#6f7175" fontSize="14.5" fontWeight="700" fontFamily="Noto Sans" textAnchor="middle">RIGHT</text>
            <text x="2436" y="1242" transform="rotate(100 2436 1238)" fill="#6f7175" fontSize="11" fontFamily="Noto Sans" textAnchor="middle">TOP</text>
            <text x="2379" y="1256" transform="rotate(-80 2379 1252)" fill="#6f7175" fontSize="10" fontFamily="Noto Sans" textAnchor="middle">FRONT</text>
            <path d="M2357 1264 2407 1185" stroke="#2f8fe8" strokeWidth="6" strokeLinecap="round" />
            <path d="M2357 1264 2360 1317" stroke="#e8525c" strokeWidth="6" strokeLinecap="round" />
            <text x="2417" y="1175" fill="#e4e4e4" fontSize="20" fontFamily="Noto Sans" textAnchor="middle">Z</text>
            <text x="2360" y="1334" fill="#e4e4e4" fontSize="20" fontFamily="Noto Sans" textAnchor="middle">X</text>
            <text x="2468" y="1324" fill="#e4e4e4" fontSize="20" fontFamily="Noto Sans" textAnchor="middle">Y</text>
            <path d="M2495 1215 2522 1219 2511 1226C2527 1236 2532 1248 2532 1260H2519C2518 1250 2513 1240 2505 1234L2501 1240Z" fill="#24272b" stroke="#43464b" />
            <path d="M2495 1315 2522 1311 2511 1304C2527 1294 2532 1282 2532 1270H2519C2518 1280 2513 1290 2505 1296L2501 1290Z" fill="#24272b" stroke="#43464b" />

            {/* bottom right view buttons */}
            <path d="M2342 1402V1408M2342 1403H2358M2342 1407H2358M2358 1401V1409" stroke="#e6e6e6" strokeWidth="1.200" />
            <rect x="2358" y="1402" width="15" height="6" fill="#e6e6e6" />
            <path d="M2428 1395 2432 1391 2436 1395M2418 1411V1415H2422M2446 1411V1415H2442" stroke="#85878b" strokeWidth="1.500" />
            <circle cx="2432" cy="1407" r="1" fill="#cfd0d2" />
            <path d="M2507 1392 2521 1398V1412L2507 1418 2493 1412V1398ZM2493 1398 2507 1404 2521 1398M2507 1404V1418M2507 1392V1404M2493 1412 2507 1406 2521 1412" stroke="#dedfe0" strokeWidth="1.600" />
          </Canvas>

          <ViewTools>
            <ToolSlot><IFull /></ToolSlot>
            <ToolSlot><Chev w={15} /></ToolSlot>
            <ToolSlot $ml={18}><ICursor /></ToolSlot>
            <ToolSlot $ml={30}><IMove /></ToolSlot>
            <ToolSlot $ml={30}><ISurface /></ToolSlot>
            <ToolSlot $ml={30}><IMercedes /></ToolSlot>
            <ToolSlot $ml={31} $off><IMeshPlus /></ToolSlot>
            <ToolSlot $ml={27}><IShapes /></ToolSlot>
            <ToolSlot $ml={34}><ICopy /></ToolSlot>
            <ToolSlot $ml={-1}><Chev w={15} /></ToolSlot>
            <ToolSlot $ml={19}><ISail /></ToolSlot>
            <ToolSlot $ml={29} $off><ILasso /></ToolSlot>
            <ToolSlot $ml={1}><Chev w={15} /></ToolSlot>
            <ToolSlot $ml={18} $off><IXBox /></ToolSlot>
            <ToolSlot><Chev w={15} /></ToolSlot>
            <ToolSlot $ml={18} $off><INoEntry /></ToolSlot>
            <GreenBtn><IGreenCheck /></GreenBtn>
            <ToolSlot $ml={3}><IDots /></ToolSlot>
          </ViewTools>

          <BellBox><IBell /></BellBox>
          <Scale>
            <ScaleLabels><ScaleLabel>0</ScaleLabel><ScaleLabel>2.5</ScaleLabel><ScaleLabel>5</ScaleLabel></ScaleLabels>
            <ScaleBar>{Array.from({ length: 10 }, (_, i) => <ScaleSeg key={i} $up={i % 2 === 0} />)}</ScaleBar>
          </Scale>

          <RightPanel>
            <PanelHead><Chev w={13} /><PanelTitle>Lines to Distance Map</PanelTitle><ICross w={13} /></PanelHead>
            {mapRows.map((r) => (
              <FieldRow key={r.l} $mt={r.mt}>
                <Field>{r.a}</Field><Field $ml={8}>{r.b}</Field><FieldLabel $ml={6}>{r.l}</FieldLabel>
              </FieldRow>
            ))}
            <FieldRow $mt={13.5} $h={24}><Box /><FieldLabel $ml={19}>With Sign</FieldLabel></FieldRow>
            <FieldRow $mt={14}><Field $w={119}>0 mm</Field><FieldLabel $ml={7}>Per Edge offset</FieldLabel></FieldRow>
            <FieldRow $mt={13} $h={24}><Box /><FieldLabel $ml={19}>Shell offset</FieldLabel></FieldRow>
            <FieldRow $mt={9.5} $h={26}><FieldLabel $ml={0}>Sign detection method</FieldLabel></FieldRow>
            <FieldRow $mt={9.5} $h={30}><Radio $on><RadioDot /></Radio><FieldLabel $ml={18}>Contours orientation</FieldLabel></FieldRow>
            <FieldRow $mt={16} $h={30}><Radio /><FieldLabel $ml={18}>Winding rule</FieldLabel></FieldRow>
            <Convert>Convert</Convert>
          </RightPanel>
        </Viewport>
      </Main>
    </Page>
  );
}
